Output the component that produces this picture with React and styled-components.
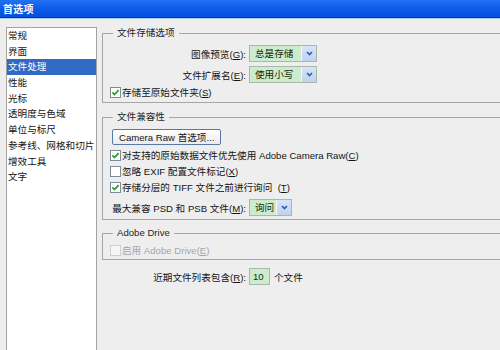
import React from 'react'
import styled, { createGlobalStyle } from 'styled-components'

const GlobalStyle = createGlobalStyle`
  html, body {
    margin: 0;
    padding: 0;
    overflow: hidden;
  }
  body {
    background: #eeeeee;
    font-family: "Liberation Sans", "Noto Sans CJK SC", sans-serif;
    font-size: 9.6px;
    color: #141414;
  }
`

const Window = styled.div`
  width: 500px;
  height: 350px;
  display: flex;
  flex-direction: column;
  overflow: hidden;
  background: #eeeeee;
`

const TitleBar = styled.div`
  flex: none;
  height: 17px;
  padding-left: 3px;
  display: flex;
  align-items: center;
  background: linear-gradient(#2272f4, #0a5ae8 55%, #0550dc);
  border-bottom: 1px solid #0036a4;
  box-shadow: 0 1px 0 #a9cdf5;
  color: #fff;
  font-weight: bold;
  font-size: 10px;
  letter-spacing: 0.2px;
`

const Body = styled.div`
  flex: 1;
  min-height: 0;
  display: flex;
  gap: 5px;
  padding: 9px 0 0 6px;
`

const Sidebar = styled.ul`
  list-style: none;
  margin: 0 0 -3px 0;
  padding: 0;
  width: 89px;
  flex: none;
  background: #fff;
  border: 1px solid #a3a3a3;
`

const Item = styled.li`
  height: 15.7px;
  line-height: 15.7px;
  padding-left: 1px;
  white-space: nowrap;
  background: ${p => (p.active ? '#316ac5' : 'transparent')};
  color: ${p => (p.active ? '#fff' : '#141414')};
`

const Panel = styled.div`
  flex: 1;
  display: flex;
  flex-direction: column;
  margin-right: -14px;
`

const Group = styled.fieldset`
  margin: ${p => p.gap || 0}px 0 0 0;
  padding: ${p => p.top || 6}px 0 ${p => p.bottom || 3}px 7px;
  min-width: 0;
  border: 1px solid #a6a6a6;
  display: flex;
  flex-direction: column;
  align-items: flex-start;
`

const Legend = styled.legend`
  margin-left: 3px;
  padding: 0 4px;
  line-height: 12px;
  color: #1e1e1e;
`

const Row = styled.div`
  display: flex;
  align-items: center;
  gap: 3px;
  height: ${p => p.h || 17}px;
  margin-top: ${p => p.mt || 0}px;
  white-space: nowrap;
`

const Label = styled.span`
  width: 136px;
  flex: none;
  text-align: right;
  white-space: nowrap;
`

const SelectBox = styled.div`
  display: flex;
  box-sizing: border-box;
  width: ${p => p.w}px;
  height: 17px;
  border: 1px solid #aab8aa;
  background: #cdeccd;
`

const SelectText = styled.span`
  flex: 1;
  padding-left: 5px;
  line-height: 15px;
  color: #0e2a0e;
`

const SelectButton = styled.span`
  width: 14px;
  display: flex;
  align-items: center;
  justify-content: center;
  border-left: 1px solid #f4f8fc;
  background: linear-gradient(#d8e5f8, #bfd2ef);
`

const NumberBox = styled.div`
  box-sizing: border-box;
  width: 21px;
  height: 17px;
  padding-left: 3px;
  line-height: 15px;
  border: 1px solid #aab8aa;
  background: #cdeccd;
  color: #0e2a0e;
`

const CheckRow = styled.label`
  display: flex;
  align-items: center;
  gap: 1px;
  height: ${p => p.h || 16}px;
  white-space: nowrap;
  color: ${p => (p.disabled ? '#a6a6a6' : '#141414')};
`

const Button = styled.button`
  height: 16px;
  margin: 0 0 2px 2px;
  padding: 0 6px;
  font: inherit;
  color: #141414;
  border: 1px solid #5878a6;
  border-radius: 2px;
  background: linear-gradient(#fefefe, #ececec);
`

const Recent = styled.div`
  margin-top: 8px;
  padding-left: 8px;
`

const Suffix = styled.span`
  margin-left: 1px;
`

const Key = styled.u`
  text-underline-offset: 1px;
`

function Chevron() {
  return (
    <svg width="7" height="5" viewBox="0 0 7 5">
      <path d="M1 1 L3.5 3.6 L6 1" fill="none" stroke="#2a5cb8" strokeWidth="1.6" />
    </svg>
  )
}

function Select({ w, value }) {
  return (
    <SelectBox w={w}>
      <SelectText>{value}</SelectText>
      <SelectButton><Chevron /></SelectButton>
    </SelectBox>
  )
}

function Box({ checked, disabled }) {
  return (
    <svg width="11" height="11" viewBox="0 0 11 11">
      <rect x="0.5" y="0.5" width="10" height="10"
        fill={disabled ? '#f6f6f6' : '#fff'}
        stroke={disabled ? '#cfcfcf' : '#7d8c99'} />
      {checked && (
        <path d="M2.4 5.4 L4.5 7.6 L8.6 3.2" fill="none" stroke="#22a022" strokeWidth="1.7" />
      )}
    </svg>
  )
}

function Check({ checked, disabled, h, children }) {
  return (
    <CheckRow h={h} disabled={disabled}>
      <Box checked={checked} disabled={disabled} />
      <span>{children}</span>
    </CheckRow>
  )
}

const items = ['常规', '界面', '文件处理', '性能', '光标', '透明度与色域', '单位与标尺', '参考线、网格和切片', '增效工具', '文字']

export default function App() {
  return (
    <Window>
      <GlobalStyle />
      <TitleBar>首选项</TitleBar>
      <Body>
        <Sidebar>
          {items.map(name => (
            <Item key={name} active={name === '文件处理'}>{name}</Item>
          ))}
        </Sidebar>

        <Panel>
          <Group top={6} bottom={4}>
            <Legend>文件存储选项</Legend>
            <Row>
              <Label>图像预览(<Key>G</Key>):</Label>
              <Select w={68} value="总是存储" />
            </Row>
            <Row mt={4}>
              <Label>文件扩展名(<Key>E</Key>):</Label>
              <Select w={68} value="使用小写" />
            </Row>
            <Row mt={3} h={12}>
              <Check checked h={12}>存储至原始文件夹(<Key>S</Key>)</Check>
            </Row>
          </Group>

          <Group gap={8} top={6} bottom={3}>
            <Legend>文件兼容性</Legend>
            <Button>Camera Raw 首选项...</Button>
            <Check checked>对支持的原始数据文件优先使用 Adobe Camera Raw(<Key>C</Key>)</Check>
            <Check>忽略 EXIF 配置文件标记(<Key>X</Key>)</Check>
            <Check checked>存储分层的 TIFF 文件之前进行询问&nbsp;&nbsp;(<Key>T</Key>)</Check>
            <Row mt={4}>
              <Label>最大兼容 PSD 和 PSB 文件(<Key>M</Key>):</Label>
              <Select w={43} value="询问" />
            </Row>
          </Group>

          <Group gap={7} top={4} bottom={2}>
            <Legend>Adobe Drive</Legend>
            <Check disabled h={14}>启用 Adobe Drive(<Key>E</Key>)</Check>
          </Group>

          <Recent>
            <Row>
              <Label>近期文件列表包含(<Key>R</Key>):</Label>
              <NumberBox>10</NumberBox>
              <Suffix>个文件</Suffix>
            </Row>
          </Recent>
        </Panel>
      </Body>
    </Window>
  )
}
